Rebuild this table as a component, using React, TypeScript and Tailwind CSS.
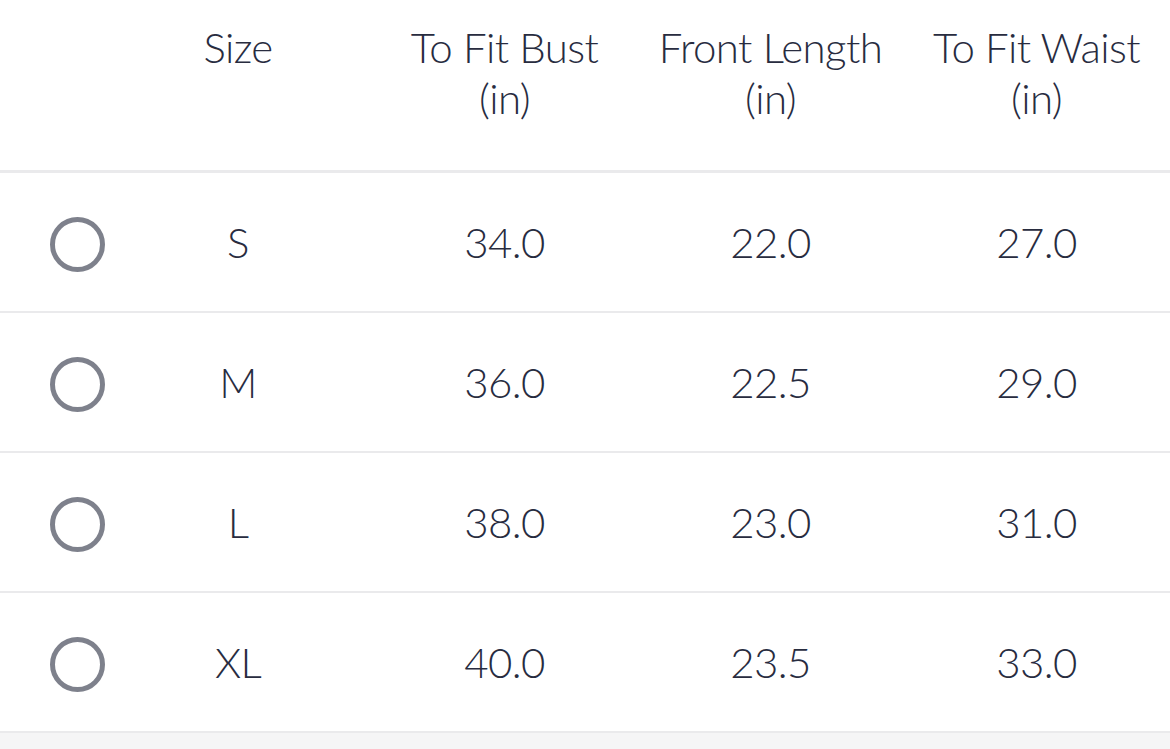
const headers = [
  { title: "Size", unit: "" },
  { title: "To Fit Bust", unit: "(in)" },
  { title: "Front Length", unit: "(in)" },
  { title: "To Fit Waist", unit: "(in)" },
]

const rows = [
  { size: "S", bust: "34.0", length: "22.0", waist: "27.0" },
  { size: "M", bust: "36.0", length: "22.5", waist: "29.0" },
  { size: "L", bust: "38.0", length: "23.0", waist: "31.0" },
  { size: "XL", bust: "40.0", length: "23.5", waist: "33.0" },
]

const App = () => {
  return (
    <div
      className="w-[1170px] h-[749px] bg-[#f5f5f6] text-[#282c3f] font-light overflow-hidden"
      style={{ fontFamily: "Lato, 'Noto Sans', sans-serif" }}
    >
      <div className="bg-white">
        {/* Header */}
        <div className="grid grid-cols-[105px_266px_267px_265px_267px] h-[173px] pt-[22px] border-b-[3px] border-[#eaeaec]">
          <div></div>
          {headers.map((h, i) => (
            <div key={i} className="flex flex-col items-center text-[42px] leading-[51px] tracking-[-0.6px]">
              <span>{h.title}</span>
              {h.unit && <span>{h.unit}</span>}
            </div>
          ))}
        </div>

        {/* Rows */}
        {rows.map((r, i) => (
          <div
            key={i}
            className="grid grid-cols-[105px_266px_267px_265px_267px] items-center h-[140px] border-b-[2px] border-[#eaeaec] text-[42px] tracking-[-0.6px]"
          >
            <div className="pl-[50px] pt-[4px]">
              <div className="w-[55px] h-[55px] rounded-full border-[5px] border-[#7e818c]"></div>
            </div>
            <div className="text-center">{r.size}</div>
            <div className="text-center">{r.bust}</div>
            <div className="text-center">{r.length}</div>
            <div className="text-center">{r.waist}</div>
          </div>
        ))}
      </div>
    </div>
  )
}

export default App
